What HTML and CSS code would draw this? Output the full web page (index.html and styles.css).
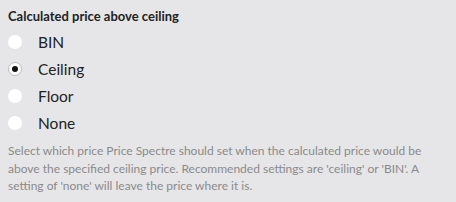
FILE: index.html
```html
<!DOCTYPE html>
<html lang="en">
  <head>
    <meta charset="UTF-8" />
    <meta name="viewport" content="width=device-width, initial-scale=1.0" />
    <title>Calculated price above ceiling</title>
    <link rel="stylesheet" href="styles.css">
  </head>
  <body>
    <div class="field">
      <div class="field__label">Calculated price above ceiling</div>
      <div class="field__options">
        <label class="radio"><span class="radio__dot"></span>BIN</label>
        <label class="radio radio--checked"><span class="radio__dot"></span>Ceiling</label>
        <label class="radio"><span class="radio__dot"></span>Floor</label>
        <label class="radio"><span class="radio__dot"></span>None</label>
      </div>
      <p class="field__help">Select which price Price Spectre should set when the calculated price would be above the specified ceiling price. Recommended settings are 'ceiling' or 'BIN'. A setting of 'none' will leave the price where it is.</p>
    </div>
  </body>
</html>
```

FILE: styles.css
```css
body {
  margin: 0;
  background-color: #e6e6e8;
  font-family: Lato, "Liberation Sans", sans-serif;
}

.field {
  padding: 7px 8px 0 8px;
}

.field__label {
  font-size: 13px;
  font-weight: 700;
  color: #222;
  line-height: 18px;
}

.field__options {
  display: flex;
  flex-direction: column;
  margin-top: 3px;
}

.radio {
  display: flex;
  align-items: center;
  height: 27px;
  font-size: 15.5px;
  color: #222;
}

.radio__dot {
  box-sizing: border-box;
  width: 14px;
  height: 14px;
  border-radius: 50%;
  background-color: #fff;
  margin-right: 16px;
  display: flex;
  align-items: center;
  justify-content: center;
}

.radio--checked .radio__dot {
  border: 1px solid #bbb;
}

.radio--checked .radio__dot::after {
  content: "";
  width: 6px;
  height: 6px;
  border-radius: 50%;
  background-color: #111;
}

.field__help {
  margin: 6px 0 0 0;
  font-size: 12px;
  line-height: 17.5px;
  color: #8a8a8a;
}
```
